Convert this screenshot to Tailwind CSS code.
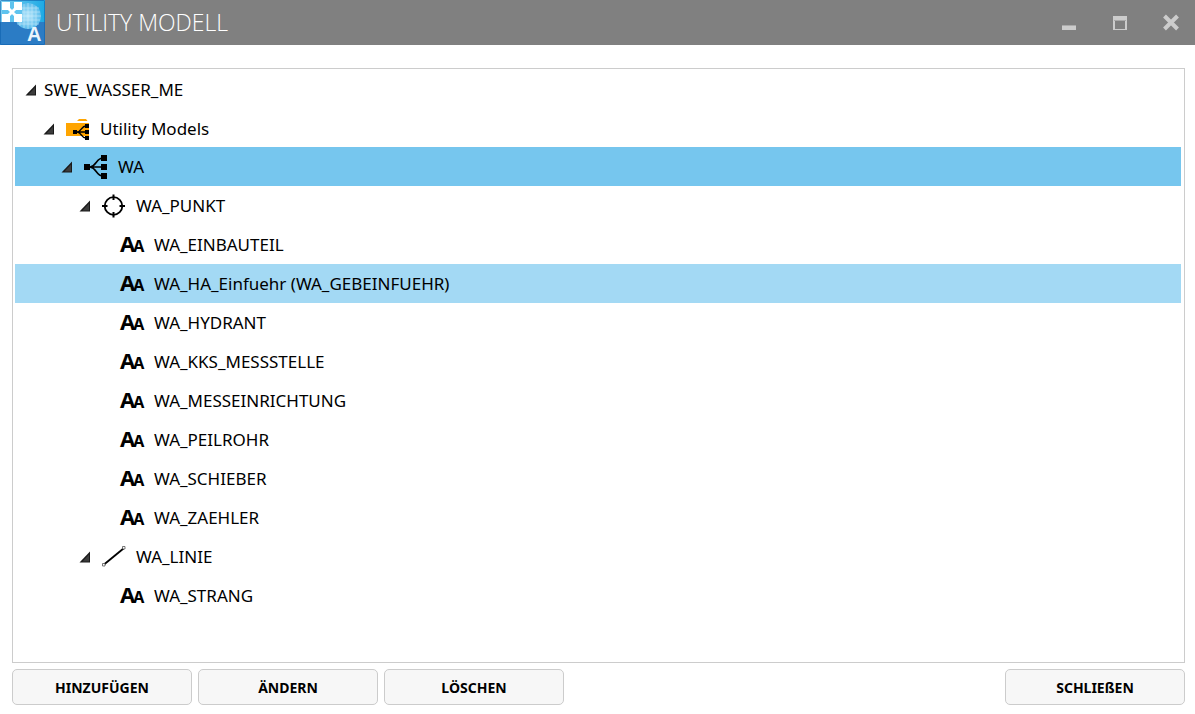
<!DOCTYPE html>
<html lang="de">
<head>
    <meta charset="UTF-8">
    <meta name="viewport" content="width=device-width, initial-scale=1.0">
    <title>Utility Modell</title>
    <script src="https://cdn.jsdelivr.net/npm/@tailwindcss/browser@4"></script>
    <style>
        body {
            font-family: 'Noto Sans', 'Open Sans', sans-serif;
        }
    </style>
</head>
<body class="bg-white text-black flex flex-col min-h-screen">
    <!-- Shared icons -->
    <svg class="hidden" aria-hidden="true">
        <symbol id="arrow" viewBox="0 0 12 12">
            <path d="M11 0.5V11.5H0.5Z" fill="#1a1a1a"/>
            <path d="M10 3.5V10.5H3.5Z" fill="#3c3c3c"/>
        </symbol>
        <symbol id="model" viewBox="0 0 26 26">
            <path d="M1 10h6v6H1zM18 1h6v6h-6zM18 10h6v6h-6zM18 19h6v6h-6z" fill="#000"/>
            <path d="M6 13H20M7 13C14 12 13 4 20 4M7 13C14 14 13 22 20 22" fill="none" stroke="#000" stroke-width="1.6"/>
        </symbol>
        <symbol id="folder" viewBox="0 0 26 26">
            <path d="M12 5L14 3H21L22.5 5Z M1 7H24V20H1Z" fill="#ffa500"/>
            <path d="M8 14h4v4H8zM20 8h4v4h-4zM20 14h4v4h-4zM20 20h4v4h-4z" fill="#000"/>
            <path d="M11 16H21M12 16C17 15.5 16 10 21 10M12 16C17 16.5 16 22 21 22" fill="none" stroke="#000" stroke-width="1.4"/>
        </symbol>
        <symbol id="point" viewBox="0 0 26 26">
            <circle cx="12.5" cy="13" r="8.8" fill="none" stroke="#000" stroke-width="1.8"/>
            <path d="M12.5 1.5V7M12.5 19V24.5M1 13H6.5M18.5 13H24" stroke="#000" stroke-width="2"/>
        </symbol>
        <symbol id="line" viewBox="0 0 26 26">
            <path d="M3 20.5L22.5 4.5" stroke="#000" stroke-width="1.8"/>
            <path d="M1.5 19.5h2.5v2.5h-2.5zM21.5 2.5h2.5v2.5h-2.5z" fill="#fff" stroke="#555" stroke-width="0.8"/>
        </symbol>
    </svg>

    <header class="flex items-center h-[45px] bg-[#808080] text-white">
        <svg class="w-[45px] h-[45px] shrink-0" viewBox="0 0 45 45" aria-hidden="true">
            <defs>
                <linearGradient id="sky" x1="0" y1="0" x2="1" y2="0">
                    <stop offset="0" stop-color="#7fd0f2"/>
                    <stop offset="1" stop-color="#1ba9e4"/>
                </linearGradient>
                <radialGradient id="globe">
                    <stop offset="0" stop-color="#b4e5fa"/>
                    <stop offset="1" stop-color="#5cbdec"/>
                </radialGradient>
            </defs>
            <rect width="45" height="45" fill="#2b7cc5"/>
            <rect width="45" height="22" fill="url(#sky)"/>
            <circle cx="28" cy="16" r="13" fill="url(#globe)"/>
            <path d="M20 6v20M24 4v24M28 3v26M32 4v24M36 6v20M17 8h22M16 12h24M15 16h26M16 20h24M17 24h22" stroke="#d8f2fd" stroke-width="0.7" opacity="0.7"/>
            <path d="M2 2h20v20H2z" fill="#5fc3ee"/>
            <path d="M2 2h8v8H2zM14 2h8v8h-8zM2 14h8v8H2zM14 14h8v8h-8z" fill="#fff"/>
            <path d="M8 8l8 8M16 8l-8 8" stroke="#fff" stroke-width="3"/>
            <rect x="0.5" y="0.5" width="44" height="44" rx="1" fill="none" stroke="#0d63ae" stroke-opacity="0.6"/>
            <text x="27" y="41" font-family="Liberation Sans, sans-serif" font-size="20" font-weight="bold" fill="#eaf4fc">A</text>
        </svg>
        <h1 class="ml-[11px] pb-[2px] font-['Open_Sans'] text-[23px] leading-8 font-light">UTILITY MODELL</h1>
        <div class="ml-auto mr-[14px] flex items-center gap-[31px]">
            <button type="button" aria-label="Minimieren" class="size-5">
                <svg class="size-5" viewBox="0 0 20 20"><path d="M3 12h14v5H3z" fill="#ccc"/><path d="M3 12h14v1H3z" fill="#aaa"/></svg>
            </button>
            <button type="button" aria-label="Maximieren" class="size-5">
                <svg class="size-5" viewBox="0 0 20 20"><path d="M3 3h14v14H3zM5 8v8h10V8z" fill="#ccc" fill-rule="evenodd"/><path d="M4 7h12v1H4z" fill="#aaa"/></svg>
            </button>
            <button type="button" aria-label="Fenster schließen" class="size-5">
                <svg class="size-5" viewBox="0 0 20 20"><path d="M3.5 3L16.5 16M16.5 3L3.5 16" stroke="#ccc" stroke-width="4"/></svg>
            </button>
        </div>
    </header>

    <main class="flex-1 mt-[23px] ml-3 mr-[10px] border border-[#ccc] pl-[2px] pr-[3px]">
        <ul role="tree" aria-label="Utility Modell" class="text-[17px] leading-6 whitespace-nowrap">
            <li role="treeitem" aria-level="1" aria-expanded="true" class="flex items-center h-[39px] pt-[2px] pl-[10px]">
                <button type="button" aria-label="Zuklappen" class="w-[19px]"><svg class="size-3"><use href="#arrow"/></svg></button>
                <span>SWE_WASSER_ME</span>
            </li>
            <li role="treeitem" aria-level="2" aria-expanded="true" class="flex items-center h-[39px] pt-[2px] pl-[28px]">
                <button type="button" aria-label="Zuklappen" class="w-[22px]"><svg class="size-3"><use href="#arrow"/></svg></button>
                <svg class="size-[26px] mr-[9px]"><use href="#folder"/></svg>
                <span>Utility Models</span>
            </li>
            <li role="treeitem" aria-level="3" aria-expanded="true" aria-selected="true" class="flex items-center h-[39px] pl-[46px] bg-[#76c6ee]">
                <button type="button" aria-label="Zuklappen" class="w-[22px]"><svg class="size-3"><use href="#arrow"/></svg></button>
                <svg class="size-[26px] mr-[9px]"><use href="#model"/></svg>
                <span>WA</span>
            </li>
            <li role="treeitem" aria-level="4" aria-expanded="true" class="flex items-center h-[39px] pl-[64px]">
                <button type="button" aria-label="Zuklappen" class="w-[22px]"><svg class="size-3"><use href="#arrow"/></svg></button>
                <svg class="size-[26px] mr-[9px]"><use href="#point"/></svg>
                <span>WA_PUNKT</span>
            </li>
            <li role="treeitem" aria-level="5" class="flex items-center h-[39px] pl-[105px]">
                <span class="w-[34px] text-[22px] font-bold" aria-hidden="true">A<span class="-ml-[2px] text-[16px]">A</span></span>
                <span>WA_EINBAUTEIL</span>
            </li>
            <li role="treeitem" aria-level="5" class="flex items-center h-[39px] pl-[105px] bg-[#a3d9f4]">
                <span class="w-[34px] text-[22px] font-bold" aria-hidden="true">A<span class="-ml-[2px] text-[16px]">A</span></span>
                <span>WA_HA_Einfuehr (WA_GEBEINFUEHR)</span>
            </li>
            <li role="treeitem" aria-level="5" class="flex items-center h-[39px] pl-[105px]">
                <span class="w-[34px] text-[22px] font-bold" aria-hidden="true">A<span class="-ml-[2px] text-[16px]">A</span></span>
                <span>WA_HYDRANT</span>
            </li>
            <li role="treeitem" aria-level="5" class="flex items-center h-[39px] pl-[105px]">
                <span class="w-[34px] text-[22px] font-bold" aria-hidden="true">A<span class="-ml-[2px] text-[16px]">A</span></span>
                <span>WA_KKS_MESSSTELLE</span>
            </li>
            <li role="treeitem" aria-level="5" class="flex items-center h-[39px] pl-[105px]">
                <span class="w-[34px] text-[22px] font-bold" aria-hidden="true">A<span class="-ml-[2px] text-[16px]">A</span></span>
                <span>WA_MESSEINRICHTUNG</span>
            </li>
            <li role="treeitem" aria-level="5" class="flex items-center h-[39px] pl-[105px]">
                <span class="w-[34px] text-[22px] font-bold" aria-hidden="true">A<span class="-ml-[2px] text-[16px]">A</span></span>
                <span>WA_PEILROHR</span>
            </li>
            <li role="treeitem" aria-level="5" class="flex items-center h-[39px] pl-[105px]">
                <span class="w-[34px] text-[22px] font-bold" aria-hidden="true">A<span class="-ml-[2px] text-[16px]">A</span></span>
                <span>WA_SCHIEBER</span>
            </li>
            <li role="treeitem" aria-level="5" class="flex items-center h-[39px] pl-[105px]">
                <span class="w-[34px] text-[22px] font-bold" aria-hidden="true">A<span class="-ml-[2px] text-[16px]">A</span></span>
                <span>WA_ZAEHLER</span>
            </li>
            <li role="treeitem" aria-level="4" aria-expanded="true" class="flex items-center h-[39px] pl-[64px]">
                <button type="button" aria-label="Zuklappen" class="w-[22px]"><svg class="size-3"><use href="#arrow"/></svg></button>
                <svg class="size-[26px] mr-[9px]"><use href="#line"/></svg>
                <span>WA_LINIE</span>
            </li>
            <li role="treeitem" aria-level="5" class="flex items-center h-[39px] pl-[105px]">
                <span class="w-[34px] text-[22px] font-bold" aria-hidden="true">A<span class="-ml-[2px] text-[16px]">A</span></span>
                <span>WA_STRANG</span>
            </li>
        </ul>
    </main>

    <footer class="flex gap-[6px] pt-[6px] pb-[9px] pl-3 pr-[10px] text-[14px] font-bold">
        <button type="button" class="w-[180px] h-9 rounded-[5px] border border-[#ccc] bg-[#f7f7f7]">HINZUFÜGEN</button>
        <button type="button" class="w-[180px] h-9 rounded-[5px] border border-[#ccc] bg-[#f7f7f7]">ÄNDERN</button>
        <button type="button" class="w-[180px] h-9 rounded-[5px] border border-[#ccc] bg-[#f7f7f7]">LÖSCHEN</button>
        <button type="button" class="ml-auto w-[180px] h-9 rounded-[5px] border border-[#ccc] bg-[#f7f7f7]">SCHLIEßEN</button>
    </footer>
</body>
</html>
